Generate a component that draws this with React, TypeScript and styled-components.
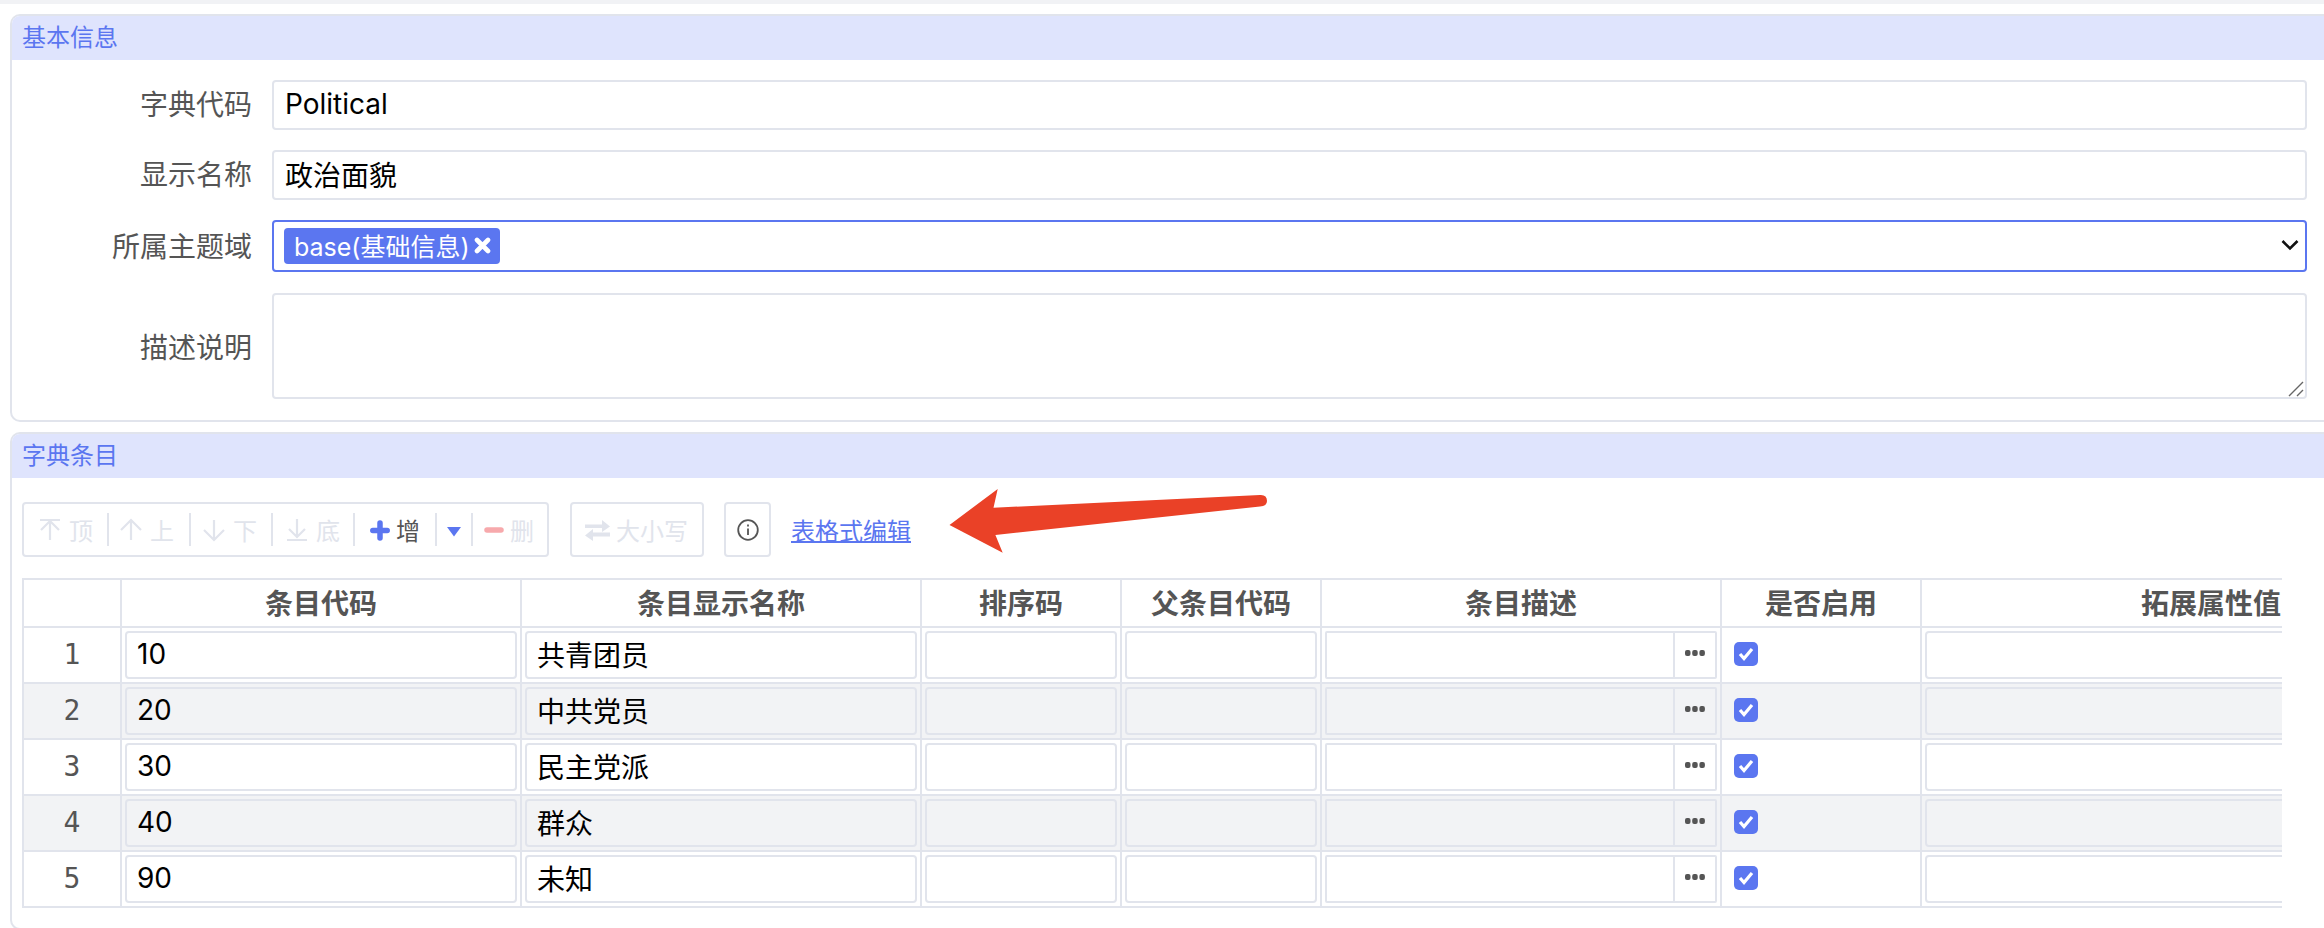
import React from "react";
import styled, { createGlobalStyle } from "styled-components";

const LINE = "#e1e4ec";
const BLUE = "#5b76f0";
const TEXT = "#555555";
const FONT = `Inter, "Noto Sans CJK SC", sans-serif`;

const Global = createGlobalStyle`
  html, body { margin: 0; padding: 0; background: #fff; overflow: hidden; }
  body { font-family: ${FONT}; }
  * { box-sizing: border-box; }
`;

const Page = styled.div`
  position: relative;
  width: 2324px;
  height: 928px;
  overflow: hidden;
  background: #fff;
`;
const TopStrip = styled.div`
  height: 4px;
  background: #f1f2f5;
`;
const Content = styled.div`
  display: flex;
  flex-direction: column;
  gap: 10px;
  padding: 10px 0 0 10px;
`;
const Card = styled.section`
  border: 2px solid ${LINE};
  border-right: none;
  border-radius: 10px 0 0 10px;
  background: #fff;
  overflow: hidden;
`;
const CardTitle = styled.h2`
  margin: -2px 0 0;
  height: 46px;
  padding: 0 0 4px 10px;
  display: flex;
  align-items: center;
  background: #dfe4fd;
  color: ${BLUE};
  font-size: 24px;
  font-weight: 400;
`;
const Form = styled.div`
  display: grid;
  grid-template-columns: 240px 2035px;
  column-gap: 20px;
  row-gap: 20px;
  padding: 20px 0 21px;
  align-items: center;
`;
const Label = styled.label<{ $nudge?: number }>`
  text-align: right;
  font-size: 28px;
  line-height: 40px;
  color: ${TEXT};
  padding-top: ${(p) => p.$nudge ?? 0}px;
`;
const TextInput = styled.input`
  display: block;
  width: 100%;
  height: 50px;
  border: 2px solid ${LINE};
  border-radius: 4px;
  padding: 0 11px 2px;
  background: transparent;
  font: 400 28px ${FONT};
  color: #000;
  outline: none;
`;
const SelectBox = styled.div`
  position: relative;
  height: 52px;
  border: 2px solid ${BLUE};
  border-radius: 4px;
  padding: 6px 10px;
  display: flex;
  align-items: flex-start;
  margin-bottom: 1px;
`;
const Tag = styled.span`
  display: inline-flex;
  align-items: center;
  gap: 4px;
  height: 36px;
  padding: 0 9px 2px 10px;
  border-radius: 4px;
  background: ${BLUE};
  color: #fff;
  font-size: 25px;
`;
const Chevron = styled.svg`
  position: absolute;
  right: 6px;
  top: 17px;
  width: 18px;
  height: 12px;
`;
const AreaWrap = styled.div`
  position: relative;
`;
const TextArea = styled.textarea`
  display: block;
  width: 100%;
  height: 106px;
  border: 2px solid ${LINE};
  border-radius: 4px;
  padding: 10px 12px;
  background: transparent;
  outline: none;
  font: 400 28px ${FONT};
  resize: none;
`;
const ResizeGrip = styled.svg`
  position: absolute;
  right: 3px;
  bottom: 2px;
  width: 16px;
  height: 16px;
`;
const Body = styled.div`
  padding: 24px 0 0 10px;
  height: 450px;
`;
const Toolbar = styled.div`
  display: flex;
  align-items: stretch;
  height: 55px;
`;
const BtnGroup = styled.div<{ $w: number; $mr: number }>`
  display: flex;
  align-items: center;
  justify-content: ${(p) => (p.$w < 100 ? "center" : "flex-start")};
  width: ${(p) => p.$w}px;
  margin-right: ${(p) => p.$mr}px;
  border: 2px solid ${LINE};
  border-radius: 4px;
  font-size: 24px;
`;
const ToolBtn = styled.span<{ $w: number; $pl: number; $gap: number; $color?: string }>`
  display: flex;
  align-items: center;
  width: ${(p) => p.$w}px;
  padding-left: ${(p) => p.$pl}px;
  gap: ${(p) => p.$gap}px;
  color: ${(p) => p.$color ?? LINE};
  white-space: nowrap;
`;
const Caret = styled.svg`
  margin-top: 5px;
`;
const Sep = styled.i`
  flex: none;
  width: 2px;
  height: 33px;
  background: ${LINE};
`;
const TextLink = styled.a`
  align-self: center;
  margin-left: 20px;
  color: ${BLUE};
  font-size: 24px;
  text-decoration: underline;
  text-underline-offset: 1px;
`;
const TableClip = styled.div`
  margin-top: 21px;
  width: 2260px;
  overflow: hidden;
`;
const Table = styled.table`
  table-layout: fixed;
  width: 2480px;
  border-collapse: separate;
  border-spacing: 0;
  border-top: 2px solid ${LINE};
  border-left: 2px solid ${LINE};
`;
const Th = styled.th`
  height: 48px;
  padding: 0 0 3px;
  border-right: 2px solid ${LINE};
  border-bottom: 2px solid ${LINE};
  color: ${TEXT};
  font-size: 28px;
  font-weight: 700;
  text-align: center;
  white-space: nowrap;
`;
const Tr = styled.tr<{ $alt: boolean }>`
  background: ${(p) => (p.$alt ? "#f2f3f5" : "#fff")};
`;
const Td = styled.td<{ $center?: boolean }>`
  height: 56px;
  padding: 3px;
  border-right: 2px solid ${LINE};
  border-bottom: 2px solid ${LINE};
  vertical-align: top;
  text-align: ${(p) => (p.$center ? "center" : "left")};
`;
const RowNo = styled.span`
  display: block;
  line-height: 48px;
  color: ${TEXT};
  font-family: "DejaVu Sans Mono", "Liberation Mono", monospace;
  font-size: 28px;
`;
const CellInput = styled(TextInput)`
  height: 48px;
  padding: 0 10px 2px;
`;
const Group = styled.div`
  display: flex;
  height: 48px;
  border: 2px solid ${LINE};
  border-radius: 2px;
`;
const GroupInput = styled.input`
  flex: 1;
  min-width: 0;
  border: none;
  background: transparent;
  outline: none;
`;
const MoreBtn = styled.span`
  flex: none;
  width: 42px;
  border-left: 2px solid ${LINE};
  display: flex;
  align-items: flex-start;
  padding-top: 11px;
  justify-content: center;
`;
const Check = styled.span`
  display: flex;
  align-items: center;
  justify-content: center;
  width: 24px;
  height: 24px;
  margin: 11px 0 0 9px;
  border-radius: 5px;
  background: ${BLUE};
`;
const ArrowMark = styled.svg`
  position: absolute;
  left: 940px;
  top: 480px;
  width: 340px;
  height: 80px;
`;

const Ic = ({ d, w = 24 }: { d: string; w?: number }) => (
  <svg width={w} height={24} viewBox={`0 0 ${w} 24`} fill="none" stroke="currentColor" strokeWidth={2.2}>
    <path d={d} />
  </svg>
);

const rows = [
  ["10", "共青团员"],
  ["20", "中共党员"],
  ["30", "民主党派"],
  ["40", "群众"],
  ["90", "未知"],
];
const widths = [98, 400, 400, 200, 200, 400, 200, 580];
const heads = ["", "条目代码", "条目显示名称", "排序码", "父条目代码", "条目描述", "是否启用", "拓展属性值"];

export default function App() {
  return (
    <Page>
      <Global />
      <TopStrip />
      <Content>
        <Card>
          <CardTitle>基本信息</CardTitle>
          <Form>
            <Label>字典代码</Label>
            <TextInput readOnly value="Political" />
            <Label>显示名称</Label>
            <TextInput readOnly value="政治面貌" />
            <Label>所属主题域</Label>
            <SelectBox>
              <Tag>
                base(基础信息)
                <svg width="17" height="17" viewBox="0 0 17 17" stroke="#fff" strokeWidth="4.6" strokeLinecap="round">
                  <path d="M3 3l11 11M14 3L3 14" />
                </svg>
              </Tag>
              <Chevron viewBox="0 0 18 12" fill="none" stroke="#111" strokeWidth="2.6">
                <path d="M1.5 2l7.5 7.5L16.5 2" />
              </Chevron>
            </SelectBox>
            <Label $nudge={3}>描述说明</Label>
            <AreaWrap>
              <TextArea readOnly />
              <ResizeGrip viewBox="0 0 16 16" fill="none" stroke="#666" strokeWidth="1.4">
                <path d="M1 15L15 1M9 15l6-6" />
              </ResizeGrip>
            </AreaWrap>
          </Form>
        </Card>
        <Card>
          <CardTitle>字典条目</CardTitle>
          <Body>
            <Toolbar>
              <BtnGroup $w={527} $mr={21}>
                <ToolBtn $w={83} $pl={15} $gap={8}>
                  <Ic w={22} d="M1 2h20M11 22V3M2 12l9-9 9 9" />
                  顶
                </ToolBtn>
                <Sep />
                <ToolBtn $w={80} $pl={10} $gap={7}>
                  <Ic w={24} d="M12 22V2M2 12L12 2l10 10" />
                  上
                </ToolBtn>
                <Sep />
                <ToolBtn $w={80} $pl={11} $gap={7}>
                  <Ic w={24} d="M12 2v20M2 12l10 10 10-10" />
                  下
                </ToolBtn>
                <Sep />
                <ToolBtn $w={80} $pl={13} $gap={8}>
                  <Ic w={22} d="M1 22h20M11 1v18M3 11l8 8 8-8" />
                  底
                </ToolBtn>
                <Sep />
                <ToolBtn $w={80} $pl={15} $gap={6} $color="#555555">
                  <svg width="20" height="24" viewBox="0 0 20 24" stroke={BLUE} strokeWidth="5.5" strokeLinecap="round">
                    <path d="M10 5v15M2.8 12.5h14.4" />
                  </svg>
                  增
                </ToolBtn>
                <Sep />
                <ToolBtn $w={34} $pl={10} $gap={0}>
                  <Caret width="14" height="10" viewBox="0 0 14 10" fill={BLUE}>
                    <path d="M0 0h14L7 9.5z" />
                  </Caret>
                </ToolBtn>
                <Sep />
                <ToolBtn $w={74} $pl={11} $gap={6}>
                  <svg width="20" height="24" viewBox="0 0 20 24" stroke="#f7a9ac" strokeWidth="5.5" strokeLinecap="round">
                    <path d="M3 12h14" />
                  </svg>
                  删
                </ToolBtn>
              </BtnGroup>
              <BtnGroup $w={134} $mr={20}>
                <ToolBtn $w={130} $pl={13} $gap={6}>
                  <svg width="25" height="24" viewBox="0 0 25 24" fill="currentColor">
                    <path d="M0 6.5h17V2l8 6.5-8 5.5V10H0zM25 14.5H8V11l-8 6.5L8 23v-4.500h17z" />
                  </svg>
                  大小写
                </ToolBtn>
              </BtnGroup>
              <BtnGroup $w={47} $mr={0}>
                <svg width="22" height="22" viewBox="0 0 22 22" fill="none" stroke="#555555" strokeWidth="1.8">
                  <circle cx="11" cy="11" r="9.8" />
                  <path d="M11 9.500v6.500M11 5.500v2" />
                </svg>
              </BtnGroup>
              <TextLink href="#">表格式编辑</TextLink>
            </Toolbar>
            <TableClip>
              <Table>
                <colgroup>
                  {widths.map((w, i) => (
                    <col key={i} width={w} />
                  ))}
                </colgroup>
                <thead>
                  <tr>
                    {heads.map((h, i) => (
                      <Th key={i}>{h}</Th>
                    ))}
                  </tr>
                </thead>
                <tbody>
                  {rows.map(([code, name], i) => (
                    <Tr key={code} $alt={i % 2 === 1}>
                      <Td $center>
                        <RowNo>{i + 1}</RowNo>
                      </Td>
                      <Td><CellInput readOnly value={code} /></Td>
                      <Td><CellInput readOnly value={name} /></Td>
                      <Td><CellInput readOnly /></Td>
                      <Td><CellInput readOnly /></Td>
                      <Td>
                        <Group>
                          <GroupInput readOnly />
                          <MoreBtn>
                            <svg width="20" height="18" viewBox="0 0 20 18" fill="#555555">
                              <rect x="0" y="6" width="5.500" height="6" rx="2" />
                              <rect x="7.200" y="6" width="5.500" height="6" rx="2" />
                              <rect x="14.400" y="6" width="5.500" height="6" rx="2" />
                            </svg>
                          </MoreBtn>
                        </Group>
                      </Td>
                      <Td>
                        <Check>
                          <svg width="16" height="14" viewBox="0 0 16 14" fill="none" stroke="#fff" strokeWidth="3.200">
                            <path d="M2 7l4 4.500L14 2" />
                          </svg>
                        </Check>
                      </Td>
                      <Td><CellInput readOnly /></Td>
                    </Tr>
                  ))}
                </tbody>
              </Table>
            </TableClip>
          </Body>
        </Card>
      </Content>
      <ArrowMark viewBox="940 480 340 80" fill="#ea4127">
        <path d="M949.500 525L997.700 489L993.500 507.700L1260 495Q1267 494.500 1267 501Q1267 506 1260 506.500L995.400 535L1002.700 552.700Z" />
      </ArrowMark>
    </Page>
  );
}
